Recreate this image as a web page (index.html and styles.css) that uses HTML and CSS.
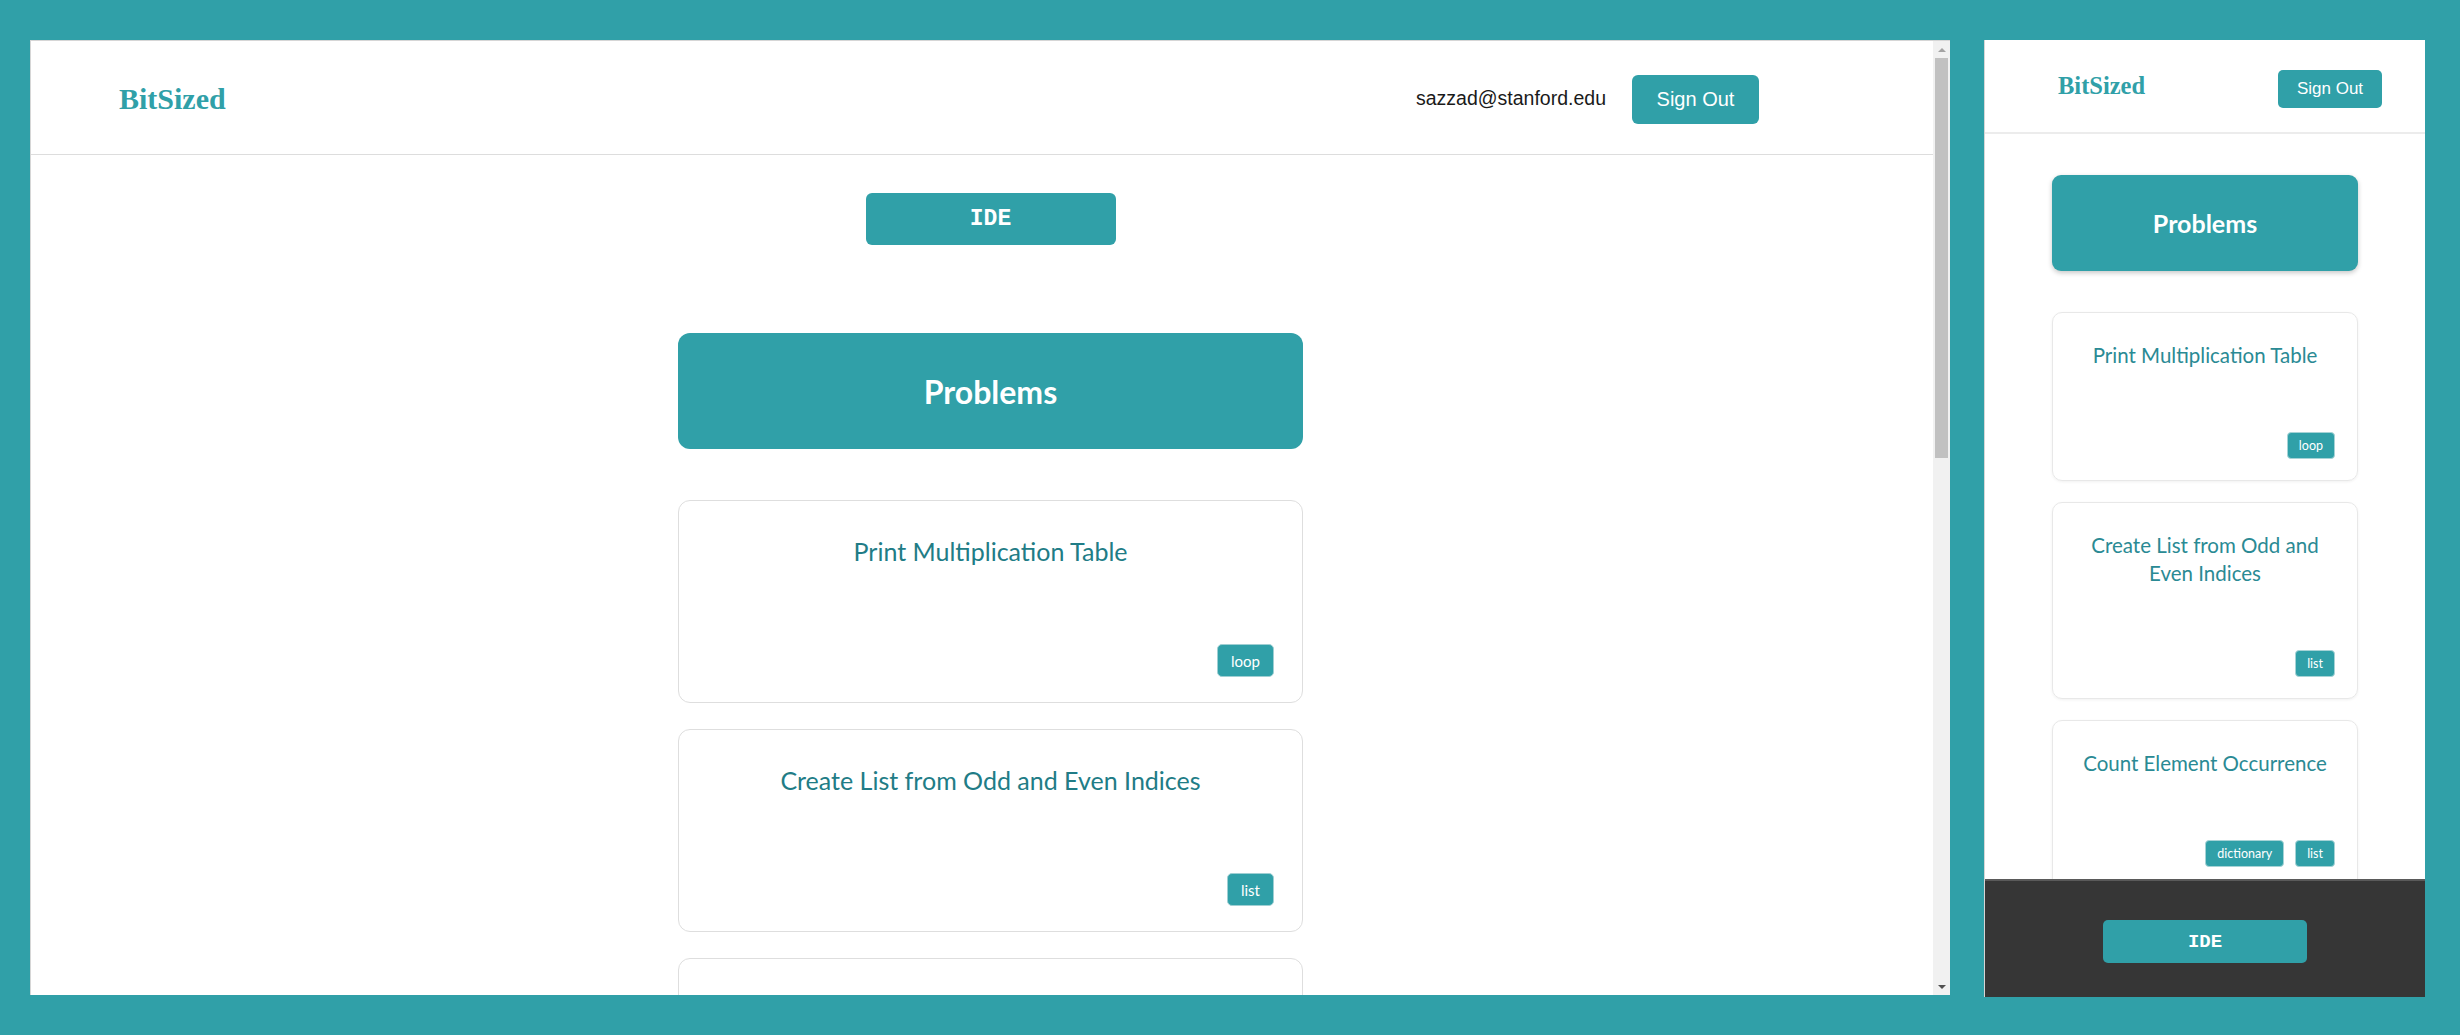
FILE: index.html
```html
<!DOCTYPE html>
<html lang="en">
<head>
<meta charset="utf-8">
<title>BitSized</title>
<link rel="stylesheet" href="styles.css">
</head>
<body>
  <div class="frame-main">
    <div class="page">
      <header class="page-header">
        <div class="brand">BitSized</div>
        <div class="user">
          <span class="email">sazzad@stanford.edu</span>
          <button class="btn-signout">Sign Out</button>
        </div>
      </header>
      <main class="main">
        <div class="ide-row"><button class="btn-ide">IDE</button></div>
        <div class="problems-head">Problems</div>
        <div class="card-list">
          <div class="card">
            <div class="card-title">Print Multiplication Table</div>
            <div class="tags"><span class="tag">loop</span></div>
          </div>
          <div class="card">
            <div class="card-title">Create List from Odd and Even Indices</div>
            <div class="tags"><span class="tag">list</span></div>
          </div>
          <div class="card">
            <div class="card-title">Count Element Occurrence</div>
            <div class="tags"><span class="tag">dictionary</span><span class="tag">list</span></div>
          </div>
        </div>
      </main>
    </div>
    <div class="scrollbar">
      <div class="sb-btn"><span class="arrow-up"></span></div>
      <div class="sb-track"><div class="sb-thumb"></div></div>
      <div class="sb-btn"><span class="arrow-down"></span></div>
    </div>
  </div>

  <div class="frame-mobile">
    <header class="m-header">
      <div class="m-brand">BitSized</div>
      <button class="m-signout">Sign Out</button>
    </header>
    <div class="m-content">
      <div class="m-problems-head">Problems</div>
      <div class="m-card-list">
        <div class="m-card">
          <div class="m-card-title">Print Multiplication Table</div>
          <div class="m-tags"><span class="m-tag">loop</span></div>
        </div>
        <div class="m-card">
          <div class="m-card-title">Create List from Odd and Even Indices</div>
          <div class="m-tags"><span class="m-tag">list</span></div>
        </div>
        <div class="m-card">
          <div class="m-card-title">Count Element Occurrence</div>
          <div class="m-tags"><span class="m-tag">dictionary</span><span class="m-tag">list</span></div>
        </div>
      </div>
    </div>
    <footer class="m-footer">
      <button class="m-ide">IDE</button>
    </footer>
  </div>
</body>
</html>
```

FILE: styles.css
```css
* { box-sizing: border-box; }

html, body {
  margin: 0;
  height: 1035px;
  overflow: hidden;
}

body {
  background: #30a0a8;
  display: flex;
  align-items: flex-start;
  gap: 34px;
  padding: 40px 35px 0 30px;
  font-family: "Lato", "Liberation Sans", sans-serif;
}

button {
  border: none;
  cursor: pointer;
  padding: 0;
}

/* ---------- desktop frame ---------- */
.frame-main {
  width: 1920px;
  height: 955px;
  background: #fff;
  display: flex;
  border-left: 1px solid #d6d6d6;
  border-top: 1px solid #d6d6d6;
  flex-shrink: 0;
}

.page {
  flex: 1;
  overflow: hidden;
}

.page-header {
  height: 114px;
  border-bottom: 1px solid #dddddd;
  display: flex;
  align-items: center;
  justify-content: space-between;
  padding: 0 174px 0 88px;
}

.brand {
  font-family: "Liberation Serif", "Times New Roman", serif;
  font-weight: bold;
  font-size: 30px;
  color: #30a0a8;
  margin-top: 2px;
}

.user {
  display: flex;
  align-items: center;
  gap: 26px;
}

.email {
  font-family: "Liberation Sans", Arial, sans-serif;
  font-size: 19.5px;
  color: #1a1a1a;
  margin-top: 2px;
}

.btn-signout {
  width: 127px;
  height: 49px;
  background: #30a0a8;
  color: #fff;
  border-radius: 6px;
  font-family: "Liberation Sans", Arial, sans-serif;
  font-size: 20px;
  margin-top: 4px;
}

.main {
  width: 625px;
  margin-left: 647px;
  padding-top: 38px;
}

.ide-row {
  display: flex;
  justify-content: center;
}

.btn-ide {
  width: 250px;
  height: 52px;
  background: #30a0a8;
  color: #fff;
  border-radius: 6px;
  font-family: "Liberation Mono", "Courier New", monospace;
  font-weight: bold;
  font-size: 23px;
}

.problems-head {
  margin-top: 88px;
  height: 116px;
  background: #30a0a8;
  color: #fff;
  border-radius: 12px;
  display: flex;
  align-items: center;
  justify-content: center;
  font-weight: bold;
  font-size: 32px;
}

.card-list {
  margin-top: 51px;
  display: flex;
  flex-direction: column;
  gap: 26px;
}

.card {
  height: 203px;
  border: 1px solid #dedede;
  border-radius: 12px;
  display: flex;
  flex-direction: column;
  padding: 35px 28px 25px;
}

.card-title {
  text-align: center;
  font-size: 25px;
  line-height: 30px;
  color: #217c86;
}

.tags {
  margin-top: auto;
  display: flex;
  justify-content: flex-end;
  gap: 12px;
}

.tag {
  height: 33px;
  padding: 0 13px;
  background: #30a0a8;
  border: 1px solid #9fcfd3;
  border-radius: 5px;
  color: #fff;
  font-size: 15px;
  display: flex;
  align-items: center;
}

/* ---------- scrollbar ---------- */
.scrollbar {
  width: 17px;
  background: #f1f1f1;
  display: flex;
  flex-direction: column;
}

.sb-btn {
  height: 17px;
  display: flex;
  align-items: center;
  justify-content: center;
}

.arrow-up {
  width: 0;
  height: 0;
  border-left: 4px solid transparent;
  border-right: 4px solid transparent;
  border-bottom: 4px solid #a3a3a3;
}

.arrow-down {
  width: 0;
  height: 0;
  border-left: 4px solid transparent;
  border-right: 4px solid transparent;
  border-top: 4px solid #505050;
}

.sb-track {
  flex: 1;
  padding: 0 2px;
}

.sb-thumb {
  height: 400px;
  background: #c1c1c1;
}

/* ---------- mobile frame ---------- */
.frame-mobile {
  width: 441px;
  height: 957px;
  background: #fff;
  display: flex;
  flex-direction: column;
  border-left: 1px solid #d6d6d6;
  flex-shrink: 0;
}

.m-header {
  height: 94px;
  border-bottom: 2px solid #ececec;
  display: flex;
  align-items: center;
  justify-content: space-between;
  padding: 0 43px 0 73px;
  flex-shrink: 0;
}

.m-brand {
  font-family: "Liberation Serif", "Times New Roman", serif;
  font-weight: bold;
  font-size: 24.5px;
  color: #30a0a8;
}

.m-signout {
  width: 104px;
  height: 38px;
  background: #30a0a8;
  color: #fff;
  border-radius: 5px;
  font-family: "Liberation Sans", Arial, sans-serif;
  font-size: 17px;
  margin-top: 5px;
}

.m-content {
  flex: 1;
  overflow: hidden;
  padding-top: 41px;
  display: flex;
  flex-direction: column;
  align-items: center;
}

.m-problems-head {
  width: 306px;
  height: 96px;
  flex-shrink: 0;
  background: #30a0a8;
  color: #fff;
  border-radius: 9px;
  box-shadow: 0 2px 5px rgba(0, 0, 0, 0.22);
  display: flex;
  align-items: center;
  justify-content: center;
  font-weight: bold;
  font-size: 25px;
}

.m-card-list {
  width: 306px;
  margin-top: 41px;
  display: flex;
  flex-direction: column;
  gap: 21px;
  flex-shrink: 0;
}

.m-card {
  border: 1px solid #e8e8e8;
  border-radius: 10px;
  box-shadow: 0 1px 3px rgba(0, 0, 0, 0.06);
  padding: 28px 22px 21px;
  display: flex;
  flex-direction: column;
}

.m-card-title {
  text-align: center;
  font-size: 20.5px;
  line-height: 28px;
  color: #2a8a94;
}

.m-tags {
  margin-top: 63px;
  display: flex;
  justify-content: flex-end;
  gap: 11px;
}

.m-tag {
  height: 27px;
  padding: 0 11px;
  background: #30a0a8;
  border: 1px solid #a6d3d6;
  border-radius: 4px;
  color: #fff;
  font-size: 12.5px;
  display: flex;
  align-items: center;
}

.m-footer {
  height: 118px;
  flex-shrink: 0;
  background: #363636;
  border-top: 2px solid #5a5a5a;
  display: flex;
  justify-content: center;
  padding-top: 39px;
}

.m-ide {
  width: 204px;
  height: 43px;
  background: #30a0a8;
  color: #fff;
  border-radius: 5px;
  font-family: "Liberation Mono", "Courier New", monospace;
  font-weight: bold;
  font-size: 19px;
}
```
